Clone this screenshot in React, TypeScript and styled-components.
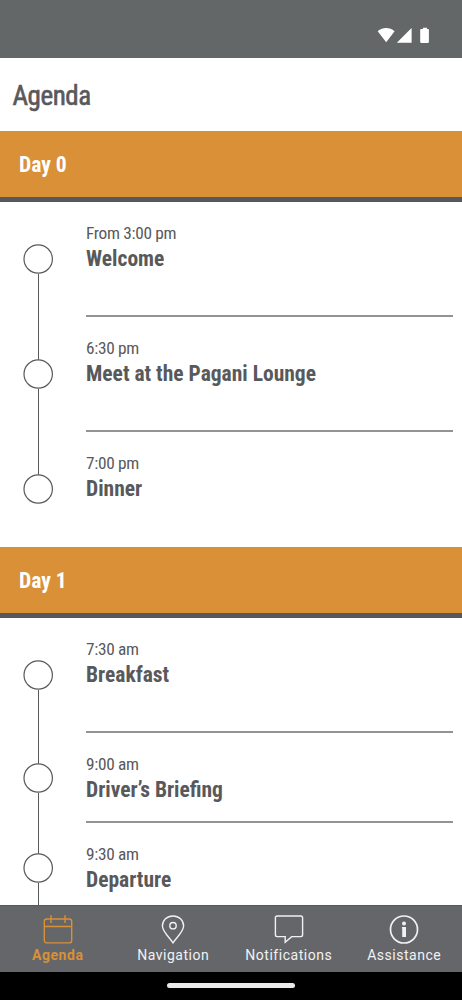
import React from "react";
import styled, { createGlobalStyle } from "styled-components";

const Global = createGlobalStyle`
  * { box-sizing: border-box; }
  body { margin: 0; background: #fff; font-family: "Roboto Condensed", Roboto, sans-serif; font-stretch: condensed; color: #58595b; }
`;

const Screen = styled.div`
  width: 462px; height: 1000px; display: flex; flex-direction: column; overflow: hidden; background: #fff;
`;
const StatusBar = styled.div`
  flex: none; height: 58px; background: #636768; display: flex; justify-content: flex-end; align-items: flex-start;
  padding: 27px 32px 0 0;
`;
const Header = styled.header`
  flex: none; height: 73px; padding: 3px 0 0 12.5px; display: flex; align-items: center;
`;
const Heading = styled.h1`
  margin: 0; font-size: 27px; line-height: 32px; font-weight: 400; letter-spacing: -0.45px; -webkit-text-stroke: 0.6px #58595b;
`;
const List = styled.main`
  flex: 1; min-height: 0; overflow: hidden;
`;
const DayBar = styled.h2`
  margin: 0; height: 71px; padding: 0 0 0 19px; display: flex; align-items: center;
  background: #d99036; border-bottom: 5px solid #56595a; color: #fff; font-size: 21.6px; font-weight: 700;
`;
const Row = styled.article<{ $h: number }>`
  height: ${(p) => p.$h}px; display: flex; padding-right: 9.5px;
`;
const Rail = styled.div`
  width: 86px; padding-left: 23px; display: flex; flex-direction: column;
`;
const Track = styled.span<{ $on: boolean }>`
  flex: 1; width: 1.4px; margin-left: 14.6px; background: ${(p) => (p.$on ? "#58595b" : "transparent")};
`;
const Ring = styled.svg`
  display: block; flex: none; width: 30px; height: 29px; overflow: visible;
`;
const Details = styled.div<{ $line: boolean }>`
  flex: 1; padding-top: 20px; border-bottom: ${(p) => (p.$line ? "2px solid #929394" : "none")};
`;
const Time = styled.div`
  font-size: 17.3px; line-height: 22px; letter-spacing: -0.32px;
`;
const Title = styled.div`
  margin-top: 1px; font-size: 21.5px; line-height: 27px; font-weight: 700;
`;
const TabBar = styled.nav`
  flex: none; height: 67px; background: #646669; border-top: 1px solid #56595a; display: grid; grid-template-columns: repeat(4, 1fr);
`;
const Tab = styled.div<{ $active?: boolean }>`
  display: flex; flex-direction: column; align-items: center; padding-top: 8px;
  color: ${(p) => (p.$active ? "#d99036" : "#f1f1f3")};
  font-family: Roboto, sans-serif; font-stretch: normal; font-size: 14px; line-height: 18px; letter-spacing: 0.52px;
  font-weight: ${(p) => (p.$active ? 700 : 400)};
  svg { display: block; margin-bottom: 2px; }
`;
const HomeArea = styled.div`
  flex: none; height: 28px; background: #000; display: flex; justify-content: center; padding-top: 11px;
`;
const Pill = styled.div`
  width: 128px; height: 5px; border-radius: 3px; background: #ebe9e9;
`;

const days = [
  { name: "Day 0", items: [["From 3:00 pm", "Welcome", 115], ["6:30 pm", "Meet at the Pagani Lounge", 115], ["7:00 pm", "Dinner", 115]], ends: true },
  { name: "Day 1", items: [["7:30 am", "Breakfast", 115], ["9:00 am", "Driver’s Briefing", 90], ["9:30 am", "Departure", 90]], ends: false },
] as { name: string; items: [string, string, number][]; ends: boolean }[];

const iconProps = { width: 30, height: 30, viewBox: "0 0 30 30", fill: "none", stroke: "currentColor", strokeWidth: 1.4 };

export default function App() {
  return (
    <Screen>
      <Global />
      <StatusBar>
        <svg width="53" height="17" viewBox="0 0 53 17" fill="#fff">
          <path d="M0.7 4.2C5.7-0.1 12.6-0.1 17.6 4.2L9.2 15.2Z" />
          <path d="M34.6 1V15.8H19.8Z" />
          <path d="M44 2H46V0.8h4V2h1.1c.5 0 .8.3.8.8v12.3c0 .5-.3.8-.8.8H44c-.5 0-.8-.3-.8-.8V2.8c0-.5.3-.8.8-.8Z" />
        </svg>
      </StatusBar>
      <Header><Heading>Agenda</Heading></Header>
      <List>
        {days.map((d) => (
          <section key={d.name}>
            <DayBar>{d.name}</DayBar>
            {d.items.map(([time, title, h], i) => {
              const last = i === d.items.length - 1;
              return (
                <Row key={title} $h={h}>
                  <Rail>
                    <Track $on={i > 0} />
                    <Ring viewBox="0 0 30 29"><circle cx="15.200" cy="14" r="14.200" fill="#fff" stroke="#58595b" strokeWidth="1.200" /></Ring>
                    <Track $on={!last || !d.ends} />
                  </Rail>
                  <Details $line={!last}>
                    <Time>{time}</Time>
                    <Title>{title}</Title>
                  </Details>
                </Row>
              );
            })}
          </section>
        ))}
      </List>
      <TabBar>
        <Tab $active>
          <svg {...iconProps}><rect x="1.300" y="5" width="27.400" height="23.900" rx="2.500" /><path d="M1.300 12.500H28.700M8 1.300V9M22 1.300V9" /></svg>
          Agenda
        </Tab>
        <Tab>
          <svg {...iconProps}><path d="M15 28.800C12.200 24.300 4.400 17.800 4.400 12.100C4.400 6.200 9 2 15 2S25.600 6.200 25.600 12.100C25.600 17.800 17.800 24.300 15 28.800Z" /><circle cx="15" cy="11.700" r="3.200" /></svg>
          Navigation
        </Tab>
        <Tab>
          <svg {...iconProps}><path d="M3.200 2H26.800Q28.600 2 28.600 3.800V20.800Q28.600 22.600 26.800 22.600H17.700L11.200 28.200V22.600H3.200Q1.400 22.600 1.400 20.800V3.800Q1.400 2 3.200 2Z" /></svg>
          Notifications
        </Tab>
        <Tab>
          <svg {...iconProps} strokeWidth={1.7}><circle cx="15" cy="15.500" r="13.500" /><g fill="currentColor" stroke="none"><circle cx="15" cy="9.600" r="2" /><path d="M12.900 12.900H17V23H13.200V14.400H12.900Z" /></g></svg>
          Assistance
        </Tab>
      </TabBar>
      <HomeArea><Pill /></HomeArea>
    </Screen>
  );
}
